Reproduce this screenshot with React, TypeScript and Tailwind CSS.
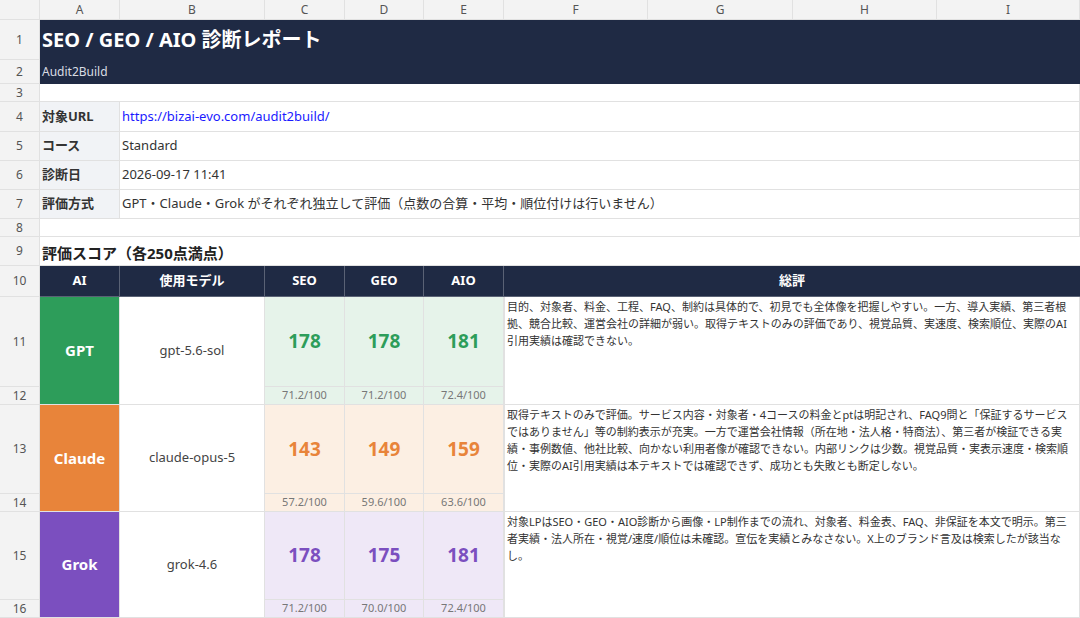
import React from "react";

const F = { fontFamily: '"Noto Sans","Noto Sans CJK JP",sans-serif' };
const b = "border-r border-b border-[#e1e1e1]";

const cols = ["A", "B", "C", "D", "E", "F", "G", "H", "I"];
const rowsN = Array.from({ length: 16 }, (_, i) => i + 1);

const ais = [
  {
    name: "GPT", model: "gpt-5.6-sol", bg: "bg-[#2d9d5a]", light: "bg-[#e6f3ea]", txt: "text-[#2d9d5a]",
    s: ["178", "178", "181"], p: ["71.2/100", "71.2/100", "72.4/100"],
    c: "目的、対象者、料金、工程、FAQ、制約は具体的で、初見でも全体像を把握しやすい。一方、導入実績、第三者根拠、競合比較、運営会社の詳細が弱い。取得テキストのみの評価であり、視覚品質、実速度、検索順位、実際のAI引用実績は確認できない。",
    rs: ["row-start-12", "row-start-13"],
  },
  {
    name: "Claude", model: "claude-opus-5", bg: "bg-[#e8843a]", light: "bg-[#fcefe3]", txt: "text-[#e8843a]",
    s: ["143", "149", "159"], p: ["57.2/100", "59.6/100", "63.6/100"],
    c: "取得テキストのみで評価。サービス内容・対象者・4コースの料金とptは明記され、FAQ9問と「保証するサービスではありません」等の制約表示が充実。一方で運営会社情報（所在地・法人格・特商法）、第三者が検証できる実績・事例数値、他社比較、向かない利用者像が確認できない。内部リンクは少数。視覚品質・実表示速度・検索順位・実際のAI引用実績は本テキストでは確認できず、成功とも失敗とも断定しない。",
    rs: ["row-start-14", "row-start-15"],
  },
  {
    name: "Grok", model: "grok-4.6", bg: "bg-[#7b4fbf]", light: "bg-[#efe8f7]", txt: "text-[#7b4fbf]",
    s: ["178", "175", "181"], p: ["71.2/100", "70.0/100", "72.4/100"],
    c: "対象LPはSEO・GEO・AIO診断から画像・LP制作までの流れ、対象者、料金表、FAQ、非保証を本文で明示。第三者実績・法人所在・視覚/速度/順位は未確認。宣伝を実績とみなさない。X上のブランド言及は検索したが該当なし。",
    rs: ["row-start-16", "row-start-17"],
  },
];
const scCols = ["col-start-4", "col-start-5", "col-start-6"];

export default function App() {
  return (
    <div style={F} className="w-[1080px] h-[618px] overflow-hidden bg-white text-[#333]">
      <div className="grid grid-cols-[40px_80px_145px_80px_79px_80px_144px_145px_144px_143px] grid-rows-[20px_40px_24px_18px_30px_29px_29px_29px_18px_29px_31px_90px_18px_89px_18px_88px_18px]">
        <div className={`col-start-1 row-start-1 bg-[#f3f3f3] ${b}`} />
        {cols.map((c, i) => (
          <div key={c} style={{ gridColumn: i + 2, gridRow: 1 }} className={`bg-[#f3f3f3] ${b} flex items-center justify-center text-[12px] text-[#555]`}>{c}</div>
        ))}
        {rowsN.map((r) => (
          <div key={r} style={{ gridColumn: 1, gridRow: r + 1 }} className={`bg-[#f3f3f3] ${b} flex items-center justify-center text-[12px] text-[#555]`}>{r}</div>
        ))}
        {/* title */}
        <div className="col-start-2 col-span-9 row-start-2 bg-[#1f2a44] text-white font-bold text-[20px] flex items-center pl-[2px]">SEO / GEO / AIO 診断レポート</div>
        <div className="col-start-2 col-span-9 row-start-3 bg-[#1f2a44] text-[#d9dce3] text-[12px] flex items-center pl-[2px]">Audit2Build</div>
        <div className={`col-start-2 col-span-9 row-start-4 ${b}`} />
        {[
          ["対象URL", "https://bizai-evo.com/audit2build/", true],
          ["コース", "Standard", false],
          ["診断日", "2026-09-17 11:41", false],
          ["評価方式", "GPT・Claude・Grok がそれぞれ独立して評価（点数の合算・平均・順位付けは行いません）", false],
        ].map(([l, v, link], i) => (
          <React.Fragment key={i}>
            <div style={{ gridColumn: 2, gridRow: i + 5 }} className={`bg-[#f1f3f6] ${b} flex items-center pl-[2px] font-bold text-[13px] text-[#333]`}>{l as string}</div>
            <div style={{ gridColumn: "3 / 11", gridRow: i + 5 }} className={`${b} flex items-center pl-[2px] text-[13px] ${link ? "text-[#1a1aff]" : "text-[#333]"}`}>{v as string}</div>
          </React.Fragment>
        ))}
        <div className={`col-start-2 col-span-9 row-start-9 ${b}`} />
        <div className="col-start-2 col-span-9 row-start-10 flex items-end pl-[2px] pb-[1px] font-bold text-[15px] text-[#222] border-b border-[#e1e1e1]">評価スコア（各250点満点）</div>
        {["AI", "使用モデル", "SEO", "GEO", "AIO"].map((h, i) => (
          <div key={h} style={{ gridColumn: i + 2, gridRow: 11 }} className="bg-[#1f2a44] border-r border-b border-[#5a6275] text-white font-bold text-[13px] flex items-center justify-center">{h}</div>
        ))}
        <div className="col-start-7 col-span-4 row-start-11 bg-[#1f2a44] border-b border-[#5a6275] text-white font-bold text-[13px] flex items-center justify-center">総評</div>
        {ais.map((a) => (
          <React.Fragment key={a.name}>
            <div className={`col-start-2 ${a.rs[0]} row-span-2 ${a.bg} border-r border-b border-[#e1e1e1] text-white font-bold text-[15px] flex items-center justify-center`}>{a.name}</div>
            <div className={`col-start-3 ${a.rs[0]} row-span-2 ${b} text-[13px] text-[#444] flex items-center justify-center`}>{a.model}</div>
            {a.s.map((s, i) => (
              <React.Fragment key={i}>
                <div className={`${scCols[i]} ${a.rs[0]} ${a.light} ${b} ${a.txt} font-bold text-[19px] flex items-center justify-center`}>{s}</div>
                <div className={`${scCols[i]} ${a.rs[1]} ${a.light} ${b} text-[11px] text-[#777] flex items-center justify-center`}>{a.p[i]}</div>
              </React.Fragment>
            ))}
            <div className={`col-start-7 col-span-4 ${a.rs[0]} row-span-2 ${b} text-[11px] leading-[17px] text-[#333] px-[2px] pt-[1px] border-l`}>{a.c}</div>
          </React.Fragment>
        ))}
      </div>
    </div>
  );
}
